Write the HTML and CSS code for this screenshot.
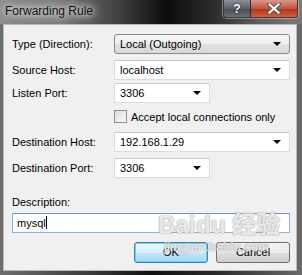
FILE: index.html
```html
<!DOCTYPE html>
<html>
<head>
  <title>Forwarding Rule</title>
  <link rel="stylesheet" href="styles.css">
</head>
<body>
  <div class="window">
    <div class="titlebar">
      <span class="title">Forwarding Rule</span>
      <div class="caption-btns">
        <div class="cap help">?</div>
        <div class="cap close">
          <svg width="14" height="11" viewBox="0 0 14 11">
            <path d="M2 1 L12 10 M12 1 L2 10" stroke="#555" stroke-width="4" stroke-linecap="square"/>
            <path d="M2.5 1.5 L11.5 9.5 M11.5 1.5 L2.5 9.5" stroke="#fff" stroke-width="2.2" stroke-linecap="square"/>
          </svg>
        </div>
      </div>
    </div>

    <div class="client">
      <div class="row first">
        <label class="lbl">Type (Direction):</label>
        <div class="combo droplist wide">Local (Outgoing)<span class="arrow"></span></div>
      </div>
      <div class="row r2">
        <label class="lbl">Source Host:</label>
        <div class="combo edit wide">localhost<span class="arrow"></span></div>
      </div>
      <div class="row r3">
        <label class="lbl">Listen Port:</label>
        <div class="combo edit short">3306<span class="arrow"></span></div>
      </div>
      <div class="row check-row">
        <span class="checkbox"></span>
        <span class="check-text">Accept local connections only</span>
      </div>
      <div class="row r4">
        <label class="lbl">Destination Host:</label>
        <div class="combo edit wide">192.168.1.29<span class="arrow"></span></div>
      </div>
      <div class="row r5">
        <label class="lbl">Destination Port:</label>
        <div class="combo edit short">3306<span class="arrow"></span></div>
      </div>

      <div class="desc-label">Description:</div>
      <div class="desc-input">mysql<span class="caret"></span></div>

      <div class="buttons">
        <div class="btn default">OK</div>
        <div class="btn">Cancel</div>
      </div>

      <div class="watermark">
        <div class="wm-logo">Bai<span class="paw">du</span> 经验</div>
        <div class="wm-url">jingyan.baidu.com</div>
      </div>
    </div>
  </div>
</body>
</html>
```

FILE: styles.css
```css
html, body {
  margin: 0;
  padding: 0;
}

body {
  width: 302px;
  height: 275px;
  overflow: hidden;
  font-family: "Liberation Sans", Arial, sans-serif;
  font-size: 11px;
  color: #000;
}

.window {
  width: 302px;
  height: 275px;
  box-sizing: border-box;
  padding: 0 5px 4px 3px;
  background: linear-gradient(90deg, #6e6e6e 0%, #3a3a3a 30%, #111 50%, #2c2c2c 72%, #6a6a6a 100%);
  display: flex;
  flex-direction: column;
}

/* title bar */
.titlebar {
  height: 24px;
  display: flex;
  justify-content: space-between;
  align-items: flex-start;
  margin-left: -3px;
  margin-right: -5px;
  background: linear-gradient(90deg, #8c8c8c 0%, #767676 20%, #3e3e3e 40%, #0c0c0c 55%, #2a2a2a 70%, #5e5e5e 85%, #7a7a7a 100%);
}

.title {
  font-size: 12px;
  line-height: 22px;
  padding-left: 5px;
  color: #111;
  text-shadow: 0 0 6px #fff, 0 0 10px #ddd, 0 0 14px #ccc;
}

.caption-btns {
  display: flex;
  margin-right: 4px;
  border: 1px solid #3a3a3a;
  border-top: none;
  border-radius: 0 0 4px 4px;
  overflow: hidden;
  box-shadow: 0 0 0 1px rgba(255,255,255,0.35);
}

.cap {
  height: 17px;
  display: flex;
  align-items: center;
  justify-content: center;
}

.help {
  width: 26px;
  background: linear-gradient(#8c8f94, #5e6168 50%, #474a51 51%, #6c6f76);
  color: #fff;
  font-weight: bold;
  font-size: 12px;
  text-shadow: 0 0 2px #000;
  border-right: 1px solid #2c2c2c;
}

.close {
  width: 46px;
  background: linear-gradient(#d9988a, #c5523d 50%, #b2301b 51%, #d2603c);
}

/* client area */
.client {
  position: relative;
  flex: 1;
  background: #f0f0f0;
  border: 1px solid #b9b9b9;
  padding: 9px 6px 0 8px;
}

.row {
  display: flex;
  align-items: center;
  height: 20px;
}

.r2 { margin-top: 6px; }
.r3 { margin-top: 3px; }
.r4 { margin-top: 9px; }
.r5 { margin-top: 6px; }

.lbl {
  width: 102px;
}

.combo {
  position: relative;
  box-sizing: border-box;
  height: 20px;
  line-height: 18px;
  padding-left: 5px;
}

.wide { width: 176px; }
.short { width: 96px; }

.droplist {
  border: 1px solid #8a8a8a;
  border-radius: 3px;
  background: linear-gradient(#f5f5f5, #eeeeee 50%, #e2e2e2 51%, #d8d8d8);
}

.edit {
  border: 1px solid #dadcdf;
  border-top-color: #c9cbcf;
  background: #fff;
}

.arrow {
  position: absolute;
  right: 8px;
  top: 7px;
  width: 0;
  height: 0;
  border-left: 4px solid transparent;
  border-right: 4px solid transparent;
  border-top: 4px solid #000;
}

.check-row {
  margin-top: 7px;
  height: 13px;
  padding-left: 102px;
}

.checkbox {
  box-sizing: border-box;
  width: 13px;
  height: 13px;
  border: 1px solid #8f8f8f;
  background: linear-gradient(135deg, #dcdcdc, #f8f8f8);
  margin-right: 4px;
}

.desc-label {
  margin-top: 17px;
  line-height: 14px;
}

.desc-input {
  box-sizing: border-box;
  margin-top: 4px;
  width: 278px;
  height: 20px;
  line-height: 18px;
  padding-left: 4px;
  background: #fff;
  border: 1px solid #8fb3d9;
  border-top-color: #6d95c2;
}

.caret {
  display: inline-block;
  width: 1px;
  height: 13px;
  background: #000;
  vertical-align: -2px;
}

.buttons {
  display: flex;
  justify-content: flex-end;
  gap: 8px;
  margin-top: 9px;
  width: 278px;
}

.btn {
  box-sizing: border-box;
  width: 74px;
  height: 21px;
  line-height: 19px;
  text-align: center;
  border: 1px solid #707070;
  border-radius: 3px;
  background: linear-gradient(#f2f2f2, #ebebeb 50%, #dddddd 51%, #cfcfcf);
}

.btn.default {
  border-color: #3c7fb1;
  background: linear-gradient(#eaf6fd, #d9f0fc 50%, #bee6fd 51%, #a7d9f5);
  box-shadow: inset 0 0 0 1px #6cd3f8;
}

/* image watermark over the dialog */
.watermark {
  position: absolute;
  left: 154px;
  top: 185px;
  color: rgba(255,255,255,0.8);
  text-shadow: 0 0 1px #999, 0 0 2px #aaa;
  pointer-events: none;
}

.wm-logo {
  font-family: "Liberation Sans", "Noto Sans CJK SC", sans-serif;
  font-weight: bold;
  font-size: 24px;
  line-height: 30px;
}

.paw {
  margin-left: 1px;
}

.wm-url {
  font-family: "Liberation Sans", sans-serif;
  font-size: 13px;
  line-height: 14px;
  margin-left: 6px;
}
```
